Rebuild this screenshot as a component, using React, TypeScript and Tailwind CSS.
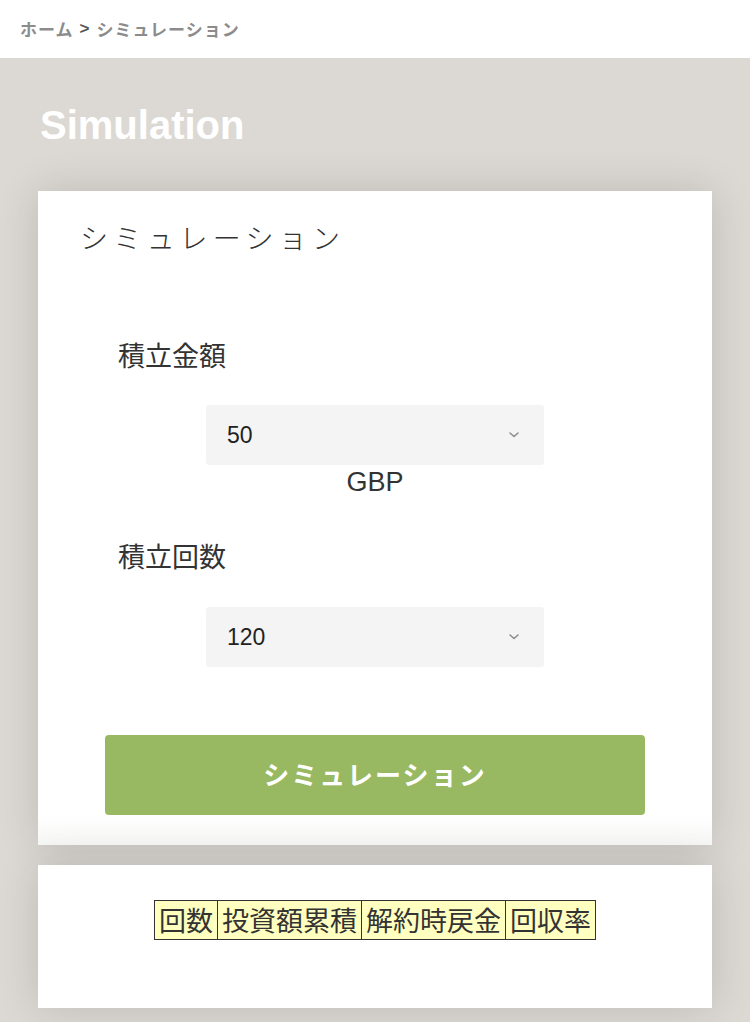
import React from 'react'

const jp = { fontFamily: '"Noto Sans CJK JP", "Noto Sans", sans-serif' }
const latin = { fontFamily: '"Liberation Sans", Arial, "Noto Sans CJK JP", sans-serif' }

function Chevron() {
  return (
    <svg width="12" height="8" viewBox="0 0 12 8" fill="none" className="text-[#8a8a8a]">
      <path d="M2 2l4 3.5L10 2" stroke="currentColor" strokeWidth="1.5" strokeLinecap="round" strokeLinejoin="round" />
    </svg>
  )
}

function FakeSelect({ value }: { value: string }) {
  return (
    <div className="mx-auto flex h-[60px] w-[338px] items-center justify-between rounded-[3px] bg-[#f4f4f4] pl-[21px] pr-[24px]">
      <span className="text-[23px] text-[#222]" style={latin}>{value}</span>
      <Chevron />
    </div>
  )
}

export default function App() {
  return (
    <div className="min-h-[1022px] bg-[#dcd9d4]">
      <div className="flex h-[58px] items-center bg-white px-[20px] text-[17px] font-bold tracking-[1px] text-[#8c8c8c]" style={jp}>
        <span>ホーム</span>
        <span className="mx-[6px] text-[#555]" style={latin}>&gt;</span>
        <span>シミュレーション</span>
      </div>

      <div className="px-[38px] pb-[14px]">
        <h1 className="pt-[42px] pb-[41px] pl-[2px] text-[40px] leading-[50px] font-bold text-white" style={latin}>
          Simulation
        </h1>

        <div className="bg-white shadow-[0_0_40px_rgba(0,0,0,0.14)]">
          <div className="bg-[linear-gradient(to_bottom,#ffffff_calc(100%-30px),#f7f7f6)] pb-[30px]">
            <h2 className="pt-[25px] pl-[42px] text-[28px] leading-[42px] font-light tracking-[0.19em] text-[#333]" style={jp}>
              シミュレーション
            </h2>

            <div className="pt-[81px] pl-[80px] text-[27px] leading-[32px] text-[#333]" style={jp}>積立金額</div>
            <div className="pt-[34px]">
              <FakeSelect value="50" />
            </div>
            <div className="text-center text-[27px] leading-[34px] text-[#333]" style={latin}>GBP</div>

            <div className="pt-[41px] pl-[80px] text-[27px] leading-[32px] text-[#333]" style={jp}>積立回数</div>
            <div className="pt-[35px]">
              <FakeSelect value="120" />
            </div>

            <div className="px-[67px] pt-[68px]">
              <button
                className="flex h-[80px] w-full items-center justify-center rounded-[4px] bg-[#98b961] pb-[3px] text-[26px] font-bold tracking-[0.08em] text-white"
                style={jp}
              >
                シミュレーション
              </button>
            </div>
          </div>
        </div>

        <div className="mt-[20px] flex h-[143px] justify-center bg-white pt-[35px] shadow-[0_0_40px_rgba(0,0,0,0.14)]">
          <table className="h-fit border-collapse bg-[#ffffc0] text-[27px] leading-[38px] text-[#333]" style={jp}>
            <tbody>
              <tr>
                <td className="border border-[#333] px-[4px]">回数</td>
                <td className="border border-[#333] px-[4px]">投資額累積</td>
                <td className="border border-[#333] px-[4px]">解約時戻金</td>
                <td className="border border-[#333] px-[4px]">回収率</td>
              </tr>
            </tbody>
          </table>
        </div>
      </div>
    </div>
  )
}
